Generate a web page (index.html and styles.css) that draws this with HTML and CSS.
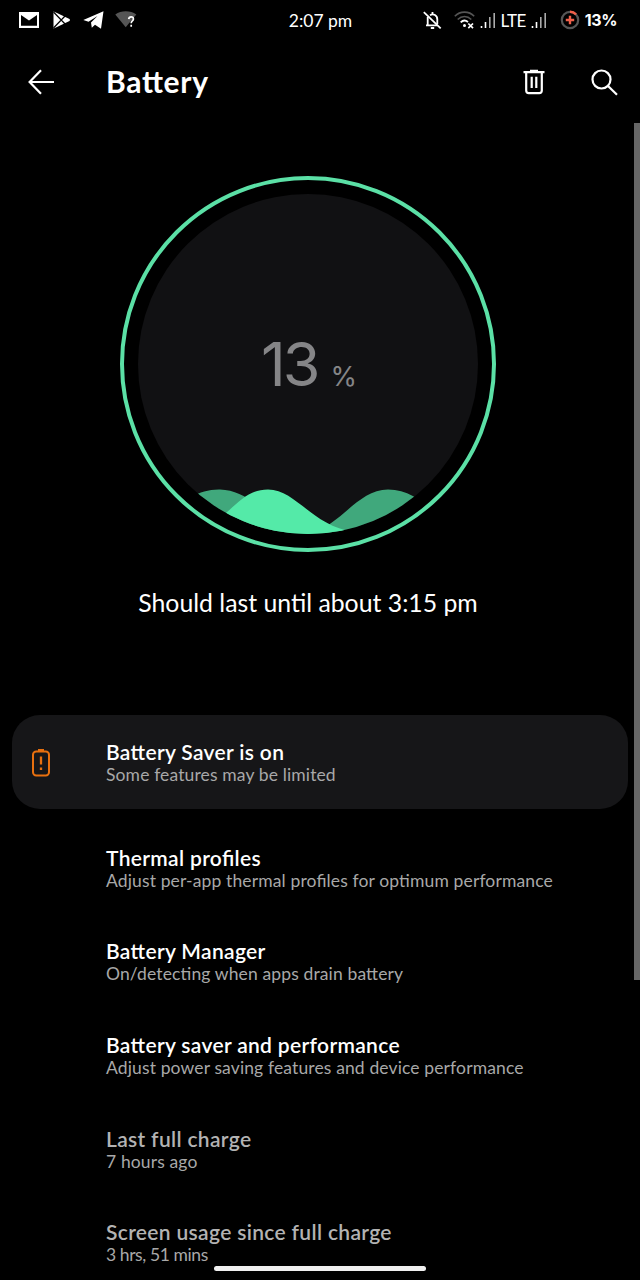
FILE: index.html
```html
<!DOCTYPE html>
<html lang="en">
<head>
<meta charset="UTF-8">
<meta name="viewport" content="width=device-width, initial-scale=1.0">
<title>Battery</title>
<link rel="stylesheet" href="styles.css">
</head>
<body>
  <div class="status-bar">
    <div class="status-left">
      <svg class="icon-mail" width="20" height="16" viewBox="0 0 20 16">
        <rect width="20" height="16" fill="#fff"/>
        <path d="M2 3L10 8.500 18 3v10.800H2z" fill="#000"/>
      </svg>
      <svg class="icon-play" width="18" height="18" viewBox="0 0 18 18">
        <path d="M.5.5v17L4 16l12.500-6q1-1 0-2L4 2z" fill="#fff"/>
        <path d="M.5 1l13 13.500M.5 17l13-13.500" stroke="#000" stroke-width="1.200"/>
      </svg>
      <svg class="icon-telegram" width="21" height="18" viewBox="0 0 21 18">
        <path d="M.3 9L20.500.3 18 17.700l-6-4-3.200 3-.8-5.200L14.500 5 5.500 10.800z" fill="#fff"/>
      </svg>
      <svg class="icon-wifi-unknown" width="23" height="20" viewBox="0 0 23 20">
        <path d="M.3 4.500C6 .3 15.500.3 21.300 4.500L10.700 17.200z" fill="#555"/>
        <path d="M13.700 9.200c.3-3.200 5-3 4.700 0-.2 1.800-2.200 1.800-2.200 4M16.200 14.800v1.900" fill="none" stroke="#fff" stroke-width="1.700"/>
      </svg>
    </div>
    <div class="clock">2:07 pm</div>
    <div class="status-right">
      <svg class="icon-bell-off" width="19" height="19" viewBox="0 0 19 19" fill="none" stroke="#fff" stroke-width="1.800">
        <path d="M4.700 6v8.300M3 14.300h11.500M7 4.200c3.500-2 7.300.2 7.300 4.300v4.500M9.500 1v2"/>
        <path d="M.8 1.200L17.700 17.300"/>
        <path d="M7.800 17h3.400" stroke-width="2"/>
      </svg>
      <svg class="icon-wifi" width="21" height="18" viewBox="0 0 21 18" fill="none" stroke-width="1.600">
        <path d="M.8 5.200C6-.2 15-.2 20.200 5.200M3.700 8.500c4-4 9.600-4 13.600 0" stroke="#555"/>
        <path d="M6.700 11.300c2-2 5-2.200 7.300-.3" stroke="#fff" stroke-width="1.800"/>
        <circle cx="10.500" cy="14.500" r="1.500" fill="#fff"/>
        <path d="M14.300 12.500l4.700 4.700M19 12.500l-4.700 4.700" stroke="#fff" stroke-width="1.700"/>
      </svg>
      <svg class="icon-signal" width="16" height="17" viewBox="0 0 16 17">
        <path d="M1.500 14v2M5.500 10v6" stroke="#fff" stroke-width="1.600"/>
        <path d="M9.800 5v11M14.200 1v15" stroke="#aaa" stroke-width="1.600"/>
      </svg>
      <span class="network">LTE</span>
      <svg class="icon-signal" width="16" height="17" viewBox="0 0 16 17">
        <path d="M1.500 14v2M5.500 10v6" stroke="#fff" stroke-width="1.600"/>
        <path d="M9.800 5v11M14.200 1v15" stroke="#aaa" stroke-width="1.600"/>
      </svg>
      <svg class="icon-charge" width="20" height="20" viewBox="0 0 20 20" fill="none">
        <circle cx="10" cy="10" r="8.200" stroke="#565656" stroke-width="2.200"/>
        <path d="M10 1.800a8.200 8.200 0 0 1 6 2.600" stroke="#f0604a" stroke-width="2.400"/>
        <path d="M10 5.800v8.400M5.800 10h8.400" stroke="#f0604a" stroke-width="2.400"/>
      </svg>
      <span class="battery-percent">13%</span>
    </div>
  </div>

  <header class="toolbar">
    <svg class="icon-back" width="26" height="26" viewBox="0 0 26 26" fill="none" stroke="#fff" stroke-width="2.200">
      <path d="M26 13H1.800M13 1.200L1.600 13 13 24.800"/>
    </svg>
    <h1 class="title">Battery</h1>
    <svg class="icon-trash" width="22" height="26" viewBox="0 0 22 26" fill="none" stroke="#fff" stroke-width="2.200">
      <path d="M.5 3.200h21M7 1.800h8"/>
      <path d="M3.200 4v17.500a2.600 2.600 0 0 0 2.600 2.600h10.400a2.600 2.600 0 0 0 2.600-2.600V4M8.700 7.800v11.200M13.300 7.800v11.200"/>
    </svg>
    <svg class="icon-search" width="27" height="27" viewBox="0 0 27 27" fill="none" stroke="#fff" stroke-width="2.200">
      <circle cx="10.500" cy="10.500" r="9"/>
      <path d="M17 17l9 8.800"/>
    </svg>
  </header>

  <main class="content">
    <div class="gauge">
      <div class="gauge-inner">
        <svg class="waves" width="340" height="340" viewBox="0 0 340 340">
          <path d="M20 318C46 310 58 295 82 295.500C106 296 122 314 140 328L185 334C208 322 224 295.500 250 295.500C274 295.500 288 312 310 324V340H20z" fill="#40a87c"/>
          <path d="M70 331C96 318 104 295.500 130 295.500C158 295.500 174 332 216 338V340H70z" fill="#54eaa8"/>
        </svg>
        <div class="level"><span class="level-number">13</span><span class="level-unit">%</span></div>
      </div>
    </div>
    <p class="estimate">Should last until about 3:15 pm</p>

    <div class="card">
      <svg class="icon-battery" width="18" height="28" viewBox="0 0 18 28" fill="none" stroke="#e8700f" stroke-width="2">
        <rect x="1" y="2.500" width="16" height="24" rx="3.200"/>
        <path d="M6 1.200h6" stroke-width="2.400"/>
        <path d="M9 7.500v8M9 18.500v2.400" stroke-width="2.300"/>
      </svg>
      <div class="row-title">Battery Saver is on</div>
      <div class="row-summary">Some features may be limited</div>
    </div>

    <div class="row">
      <div class="row-title">Thermal profiles</div>
      <div class="row-summary">Adjust per-app thermal profiles for optimum performance</div>
    </div>
    <div class="row">
      <div class="row-title">Battery Manager</div>
      <div class="row-summary">On/detecting when apps drain battery</div>
    </div>
    <div class="row">
      <div class="row-title">Battery saver and performance</div>
      <div class="row-summary">Adjust power saving features and device performance</div>
    </div>
    <div class="row">
      <div class="row-title muted">Last full charge</div>
      <div class="row-summary">7 hours ago</div>
    </div>
    <div class="row">
      <div class="row-title muted">Screen usage since full charge</div>
      <div class="row-summary compact">3 hrs, 51 mins</div>
    </div>
  </main>
  <div class="scrollbar"></div>
  <div class="home-pill"></div>
</body>
</html>
```

FILE: styles.css
```css
html, body {
  height: 100%;
  margin: 0;
  padding: 0;
  overflow: hidden;
  background: #000;
  color: #fff;
  font-family: 'Lato', 'Open Sans', sans-serif;
  font-feature-settings: 'liga' 1;
}
svg {
  display: block;
  flex: none;
}
.status-bar {
  display: grid;
  grid-template-columns: 1fr auto 1fr;
  align-items: center;
  height: 40px;
  padding: 0 23px 0 19px;
  font-size: 17px;
}
.clock {
  padding-left: 5px;
  font-size: 17.500px;
}
.status-left,
.status-right {
  display: flex;
  align-items: center;
}
.icon-play {
  margin-left: 14px;
}
.icon-telegram {
  margin-left: 12px;
}
.icon-wifi-unknown {
  margin-left: 11px;
}
.status-right {
  justify-content: flex-end;
}
.icon-wifi {
  margin-left: 12px;
}
.icon-signal {
  margin-left: 5px;
}
.network {
  margin-left: 5px;
  letter-spacing: -0.6px;
}
.icon-charge {
  margin-left: 13px;
}
.battery-percent {
  margin-left: 5px;
  font-family: 'Inter', sans-serif;
  font-size: 16px;
  font-weight: 700;
  letter-spacing: -0.4px;
}
.toolbar {
  display: flex;
  align-items: center;
  height: 84px;
  padding: 0 22px 0 28px;
}
.title {
  flex: 1;
  margin: -2px 0 0 52px;
  font-size: 30px;
  line-height: 36px;
  font-weight: 700;
  letter-spacing: 0.7px;
}
.icon-search {
  margin-left: 46px;
}
.content {
  padding: 0 12px;
}
.gauge {
  display: flex;
  box-sizing: border-box;
  width: 376px;
  height: 376px;
  margin: 52px 0 0 108px;
  padding: 14px;
  border: 4px solid #5be0a6;
  border-radius: 50%;
}
.gauge-inner {
  display: grid;
  width: 340px;
  height: 340px;
  border-radius: 50%;
  background: #111113;
  overflow: hidden;
}
.waves,
.level {
  grid-area: 1 / 1;
}
.level {
  align-self: center;
  justify-self: center;
  padding: 16px 0 0 2px;
  color: #858587;
  font-family: 'Inter', sans-serif;
  line-height: 74px;
}
.level-number {
  font-size: 61px;
  letter-spacing: -3px;
}
.level-unit {
  margin-left: 13px;
  font-size: 27px;
}
.estimate {
  margin: 35px 0 0;
  padding-right: 24px;
  font-size: 24.800px;
  line-height: 32px;
  text-align: center;
}
.card,
.row {
  display: grid;
  box-sizing: border-box;
  grid-template-columns: 94px 1fr;
  align-content: center;
  height: 93.700px;
  padding-top: 3px;
}
.card {
  margin: 96px 0 12px;
  border-radius: 28px;
  background: #161618;
}
.icon-battery {
  grid-row: 1 / 3;
  align-self: center;
  margin-left: 20px;
}
.row-title,
.row-summary {
  grid-column: 2;
  white-space: nowrap;
}
.row-title {
  font-size: 21px;
  line-height: 23px;
  font-weight: 600;
  letter-spacing: 0.33px;
}
.row-summary {
  color: #a8a8a8;
  font-size: 17.500px;
  line-height: 24px;
  letter-spacing: 0.13px;
}
.compact {
  letter-spacing: -0.4px;
}
.muted {
  color: #b3b3b3;
}
.scrollbar {
  position: absolute;
  top: 123px;
  right: 0;
  width: 6px;
  height: 857px;
  background: #666;
}
.home-pill {
  position: absolute;
  left: 214px;
  bottom: 9px;
  width: 212px;
  height: 5px;
  border-radius: 3px;
  background: #f0f0f0;
}
```
